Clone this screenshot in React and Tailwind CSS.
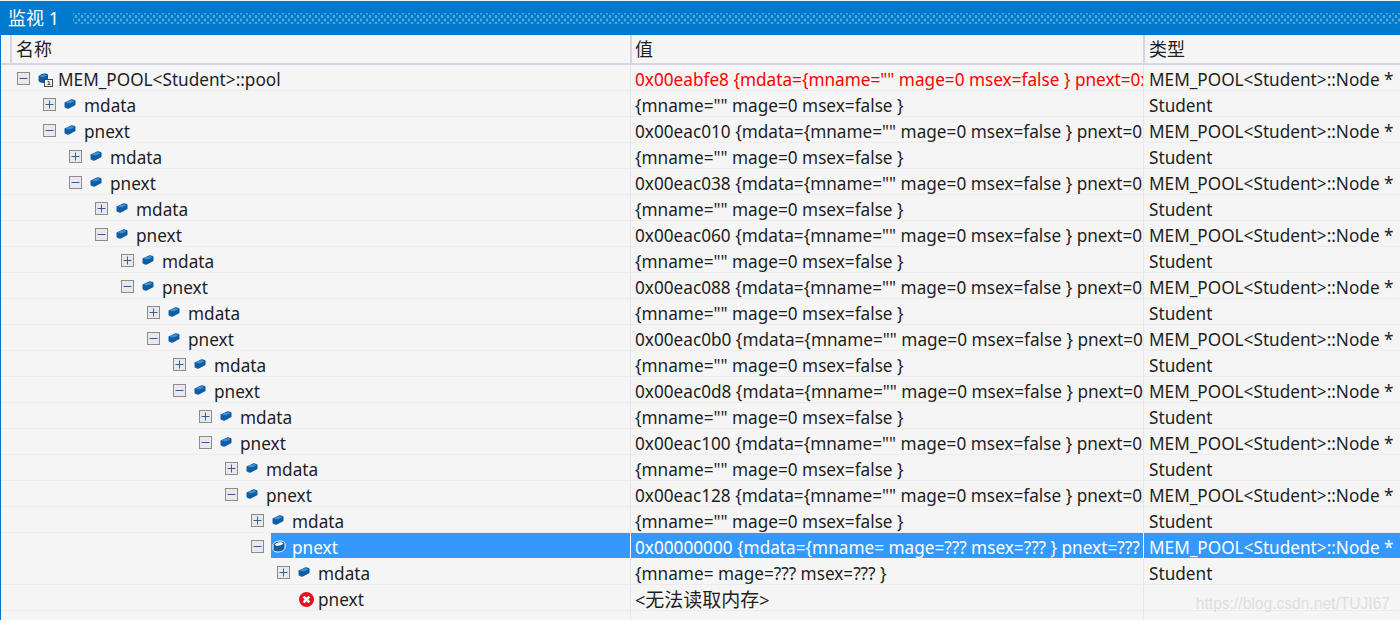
const FONT = "font-['Noto_Sans','Noto_Sans_CJK_SC',sans-serif]";

function Expander({ open }) {
  return (
    <svg width="13" height="13" viewBox="0 0 13 13" className="block shrink-0">
      <rect x="0.5" y="0.5" width="12" height="12" fill="#e9e9e9" stroke="#8c8c8c" />
      <path d="M2.5 6.5H10.5" stroke="#3a5a9c" />
      {!open && <path d="M6.5 2.5V10.5" stroke="#3a5a9c" />}
    </svg>
  );
}

function Cube({ selected }) {
  if (selected) {
    return (
      <svg width="14" height="13" viewBox="0 0 14 13" className="block shrink-0">
        <path d="M1 4.5C1 3 5 1 8 1C10.5 1 13 2 13 3.5V8C13 10 9 12 6 12C3 12 1 11 1 9.5Z" fill="#0e5ea6" stroke="#ffffff" />
        <path d="M2.5 4.5C3.5 3.2 6 2.2 8 2.2C9.8 2.2 11.5 2.8 11.5 3.6C10.5 4.8 8 5.8 6 5.8C4.2 5.8 3 5.3 2.5 4.5Z" fill="#ffffff" />
      </svg>
    );
  }
  return (
    <svg width="12" height="10" viewBox="0 0 12 10" className="block shrink-0">
      <path d="M0.5 3.5L7 0.4C9 0.2 11.5 1 11.5 2.2V6L5 9.6C3 9.9 0.5 9 0.5 7.5Z" fill="#0f5ca5" />
      <path d="M2 3.5C3 2.3 5.5 1.3 7.5 1.3C9 1.3 10 1.7 10 2.2C9 3.3 6.5 4.3 4.5 4.3C3.2 4.3 2.3 4 2 3.5Z" fill="#3f8fd2" />
    </svg>
  );
}

function PoolIcon() {
  return (
    <svg width="16" height="14" viewBox="0 0 16 14" className="block shrink-0">
      <path d="M0.5 3.5C1 2 4.5 0.5 6.5 0.5C8.5 0.5 10 1 10 2V7C10 8.5 7.5 10 5 10C2.5 10 0.5 9 0.5 7.5Z" fill="#0f5ca5" />
      <path d="M2 3.3C3 2.3 5 1.5 6.5 1.5C7.8 1.5 8.6 1.8 8.6 2.2C7.8 3.2 5.5 4 4 4C3 4 2.3 3.7 2 3.3Z" fill="#3f8fd2" />
      <rect x="6.5" y="6.5" width="8" height="7" fill="#f5f5f5" stroke="#444444" />
      <path d="M9.5 8.5H11V11.5M9.5 11.5H12.5" stroke="#444444" fill="none" />
    </svg>
  );
}

function ErrorIcon() {
  return (
    <svg width="15" height="15" viewBox="0 0 15 15" className="ml-[1px] block shrink-0">
      <circle cx="7.5" cy="7.5" r="7.5" fill="#e81123" />
      <path d="M4.6 4.6L10.4 10.4M10.4 4.6L4.6 10.4" stroke="#ffffff" strokeWidth="2.6" />
    </svg>
  );
}

const V = (a) => `${a} {mdata={mname="" mage=0 msex=false } pnext=0x00eac038 {mdata={mname="" mage=0 msex=false } pnext=...`;
const DATA = '{mname="" mage=0 msex=false }';
const NODE = "MEM_POOL<Student>::Node *";

const rows = [
  { d: 0, open: true, icon: "pool", name: "MEM_POOL<Student>::pool", value: V("0x00eabfe8"), type: NODE, red: true },
];
const addrs = ["0x00eac010", "0x00eac038", "0x00eac060", "0x00eac088", "0x00eac0b0", "0x00eac0d8", "0x00eac100", "0x00eac128"];
addrs.forEach((a, i) => {
  rows.push({ d: i + 1, name: "mdata", value: DATA, type: "Student" });
  rows.push({ d: i + 1, open: true, name: "pnext", value: V(a), type: NODE });
});
rows.push({ d: 9, name: "mdata", value: DATA, type: "Student" });
rows.push({ d: 9, open: true, name: "pnext", value: "0x00000000 {mdata={mname= mage=??? msex=??? } pnext=??? }", type: NODE, selected: true });
rows.push({ d: 10, name: "mdata", value: "{mname= mage=??? msex=??? }", type: "Student" });
rows.push({ d: 10, icon: "error", leaf: true, name: "pnext", value: <span className="text-[19px]"><span className="text-[18px]">&lt;</span>无法读取内存<span className="text-[18px]">&gt;</span></span>, type: "" });
rows.push({ d: 0, empty: true, name: "", value: "", type: "" });

function Row({ r }) {
  const text = r.selected ? "text-white" : "text-[#1e1e1e]";
  const band = r.selected ? "bg-[#3399ff]" : "";
  const iconPad = r.icon === "pool" ? "pt-[4px]" : r.icon === "error" ? "pt-[3px]" : r.selected ? "pt-[2px]" : "";
  return (
    <div className={`flex h-[26px] w-full border-b ${r.selected ? "border-[#f5f5f5]" : "border-[#ececec]"}`}>
      <div className="flex w-[629px] shrink-0 items-center overflow-hidden pl-[16px]">
        {!r.empty && (
          <div className="flex h-full min-w-0 flex-1 items-center" style={{ marginLeft: r.d * 26 }}>
            <div className="w-[20px] shrink-0 pt-[1px]">{!r.leaf && <Expander open={r.open} />}</div>
            <div className={`flex h-full min-w-0 flex-1 items-center pl-[1px] ${band}`}>
              <div className={`flex w-[20px] shrink-0 items-center ${iconPad}`}>
                {r.icon === "pool" ? <PoolIcon /> : r.icon === "error" ? <ErrorIcon /> : <Cube selected={r.selected} />}
              </div>
              <div className={`whitespace-nowrap pt-[4px] text-[17.2px] leading-[20px] ${text}`}>{r.name}</div>
            </div>
          </div>
        )}
      </div>
      <div className={`flex w-[513px] shrink-0 items-center overflow-hidden whitespace-nowrap border-l border-[#e6e6e6] pl-[4px] pt-[4px] text-[17.2px] leading-[20px] ${r.selected ? "border-white bg-[#3399ff] text-white" : r.red ? "text-[#ff0000]" : "text-[#1e1e1e]"}`}>
        {r.value}
      </div>
      <div className={`flex min-w-0 flex-1 items-center overflow-hidden whitespace-nowrap border-l border-[#e6e6e6] pl-[5px] pt-[4px] text-[17.2px] leading-[20px] ${r.selected ? "border-white bg-[#3399ff] text-white" : "text-[#1e1e1e]"}`}>
        {r.type}
      </div>
    </div>
  );
}

export default function App() {
  return (
    <div className={`relative h-[620px] w-[1400px] overflow-hidden bg-[#f5f5f5] ${FONT}`}>
      <div className="h-[1px] bg-[#f0f0f0]" />
      <div className="flex h-[34px] items-center bg-[#007acc] pl-[8px]">
        <span className="whitespace-pre text-[18px] text-white">监视 1</span>
        <div className="ml-[14px] h-[11px] flex-1 bg-[radial-gradient(#4fa8e0_1.1px,transparent_1.6px),radial-gradient(#4fa8e0_1.1px,transparent_1.6px)] bg-[length:6px_7px] bg-[position:0_0,3px_3.5px]" />
      </div>
      <div className="border-l border-[#007acc]">
        <div className="flex h-[30px] border-b-2 border-[#d6d6e0] text-[18px] text-[#1e1e1e]">
          <div className="flex w-[629px] shrink-0 pl-[9px]">
            <div className="flex h-full items-center border-l-2 border-[#d6d6e0] pl-[4px]">名称</div>
          </div>
          <div className="flex w-[513px] shrink-0 items-center border-l-2 border-[#d6d6e0] pl-[3px]">值</div>
          <div className="flex flex-1 items-center border-l-2 border-[#d6d6e0] pl-[4px]">类型</div>
        </div>
        <div>
          {rows.map((r, i) => (
            <Row key={i} r={r} />
          ))}
        </div>
      </div>
      <div className="absolute bottom-[5px] right-[10px] font-['Liberation_Sans',sans-serif] text-[15.6px] text-[#dedede]">
        https://blog.csdn.net/TUJI67
      </div>
    </div>
  );
}
